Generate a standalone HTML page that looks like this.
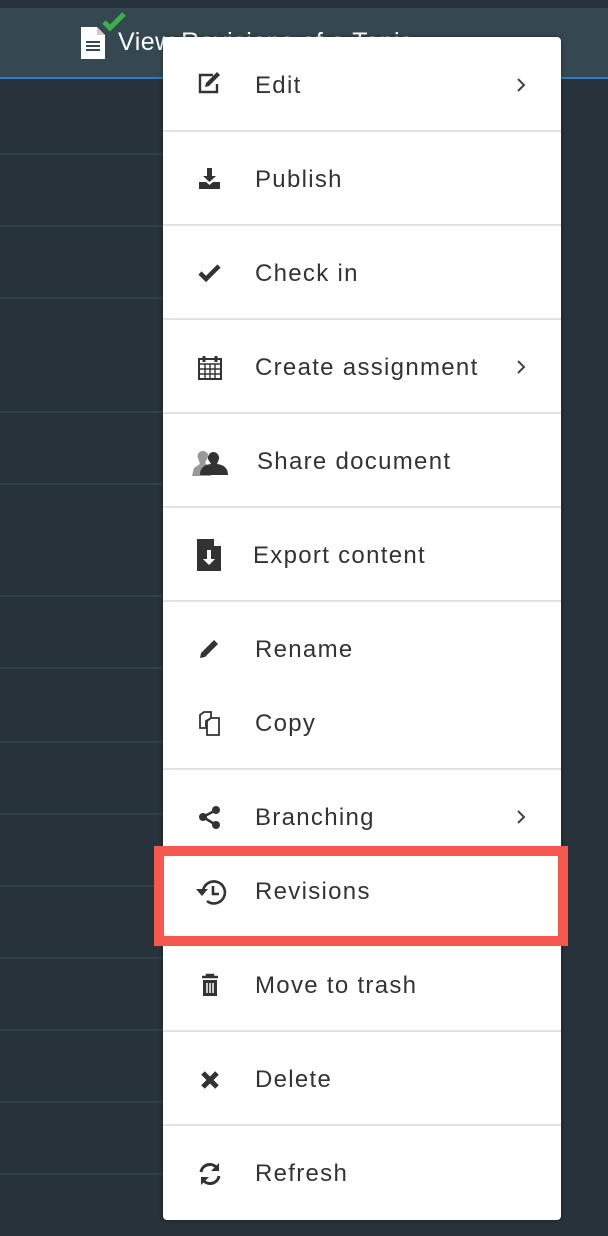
<!DOCTYPE html>
<html><head><meta charset="utf-8"><style>
*{margin:0;padding:0;box-sizing:border-box}
body{width:608px;height:1236px;background:#27323a;position:relative;overflow:hidden;font-family:"Liberation Sans",sans-serif}
.hdr{position:absolute;left:0;top:0;width:608px;height:79px;background:#354750;border-bottom:2px solid #2b7cbf}
.hdr .top{position:absolute;top:0;left:0;width:608px;height:8px;background:#27333a}
.title{position:absolute;left:118px;top:28px;color:#fff;font-size:25px;letter-spacing:0.5px}
.ln{position:absolute;left:0;width:163px;height:2px;background:#313f47}
.menu{position:absolute;left:163px;top:37px;width:398px;height:1183px;background:#fff;border-radius:4px;box-shadow:0 0 4px rgba(0,0,0,.4)}
.it{position:absolute;left:0;width:398px;height:30px}
.it span{position:absolute;left:92px;top:1px;font-size:24px;color:#333;line-height:30px;letter-spacing:1.3px}
.it svg{position:absolute;left:34px;top:3px}
.it .ch{position:absolute;left:352px;top:7px}
.dv{position:absolute;left:0;width:398px;height:2px;background:#e2e2e2}
.red{position:absolute;left:154px;top:846px;width:414px;height:100px;border:10px solid #f5584c}
</style></head><body>
<div class="hdr"><div class="top"></div>
<svg style="position:absolute;left:79px;top:26px" width="28" height="34" viewBox="0 0 28 34"><path d="M2 1h16l8 8v24H2z" fill="#fff"/><path d="M18 1v8h8" fill="#ccc"/><path d="M7 16h14M7 20h14M7 24h14" stroke="#354750" stroke-width="2"/></svg>
<svg style="position:absolute;left:101px;top:12px" width="26" height="20" viewBox="0 0 26 20"><path d="M3 10l6 6L23 2" stroke="#3cb04a" stroke-width="5" fill="none"/></svg>
<div class="title">View Revisions of a Topic</div></div>
<div class="ln" style="top:153px"></div><div class="ln" style="top:225px"></div><div class="ln" style="top:297px"></div><div class="ln" style="top:411px"></div><div class="ln" style="top:483px"></div><div class="ln" style="top:595px"></div><div class="ln" style="top:667px"></div><div class="ln" style="top:741px"></div><div class="ln" style="top:813px"></div><div class="ln" style="top:885px"></div><div class="ln" style="top:957px"></div><div class="ln" style="top:1029px"></div><div class="ln" style="top:1101px"></div><div class="ln" style="top:1173px"></div>
<div class="menu">
<div class="it" style="top:33px"><svg width="28" height="26" viewBox="0 0 28 26" style="left:33px;top:1px"><path d="M17 4H4v17h17v-8" stroke="#333" stroke-width="2.4" fill="none"/><path d="M9 16l1-4 11-11 3 3-11 11z" fill="#333"/></svg><span>Edit</span><svg class="ch" width="12" height="16" viewBox="0 0 12 16"><path d="M3 2l6 6-6 6" stroke="#444" stroke-width="2" fill="none"/></svg></div>
<div class="dv" style="top:93px"></div>
<div class="it" style="top:127px"><svg width="26" height="24" viewBox="0 0 26 24"><path d="M10 1h5v8h4l-6.5 6L6 9h4z" fill="#333"/><path d="M2 15h7l3.5 3 3.5-3h7v7H2z" fill="#333"/></svg><span>Publish</span></div>
<div class="dv" style="top:187px"></div>
<div class="it" style="top:221px"><svg width="26" height="24" viewBox="0 0 26 24"><path d="M3 12l6 6L22 5" stroke="#333" stroke-width="4.5" fill="none"/></svg><span>Check in</span></div>
<div class="dv" style="top:281px"></div>
<div class="it" style="top:315px"><svg width="26" height="26" viewBox="0 0 26 26"><rect x="2" y="4" width="22" height="20" fill="none" stroke="#333" stroke-width="2"/><path d="M2 9h22M2 14h22M2 19h22M8 9v15M13 9v15M18 9v15" stroke="#333" stroke-width="1.4"/><path d="M7 1v6M19 1v6" stroke="#333" stroke-width="3"/></svg><span>Create assignment</span><svg class="ch" width="12" height="16" viewBox="0 0 12 16"><path d="M3 2l6 6-6 6" stroke="#444" stroke-width="2" fill="none"/></svg></div>
<div class="dv" style="top:375px"></div>
<div class="it" style="top:409px"><svg width="38" height="28" viewBox="0 0 38 28" style="left:28px"><path d="M12 2a5 5 0 0 1 5 6l-3 6 6 5v8H1l2-8 6-4-2-6a5 5 0 0 1 5-7z" fill="#999"/><path d="M22 3a6 6 0 0 1 6 7l-2 5c8 1 11 5 11 11H9c0-6 3-10 11-11l-3-5a6 6 0 0 1 5-7z" fill="#333"/></svg><span style="left:94px">Share document</span></div>
<div class="dv" style="top:469px"></div>
<div class="it" style="top:503px"><svg width="28" height="34" viewBox="0 0 28 34" style="left:32px;top:-2px"><path d="M2 1h17l7 7v25H2z" fill="#333"/><path d="M19 1v7h7" fill="#fff"/><path d="M12 12h4v9h4l-6 6-6-6h4z" fill="#fff"/></svg><span style="left:90px">Export content</span></div>
<div class="dv" style="top:563px"></div>
<div class="it" style="top:597px"><svg width="26" height="24" viewBox="0 0 26 24"><path d="M3 21l1-5L17 3l4 4L8 20z" fill="#333"/></svg><span>Rename</span></div>
<div class="it" style="top:671px"><svg width="26" height="26" viewBox="0 0 26 26"><path d="M3 4l4-3h7v6l-5 3v7H3z M10 10l4-3h8v17H10z" fill="none" stroke="#333" stroke-width="1.8"/></svg><span>Copy</span></div>
<div class="dv" style="top:731px"></div>
<div class="it" style="top:765px"><svg width="26" height="26" viewBox="0 0 26 26"><circle cx="19" cy="5" r="4" fill="#333"/><circle cx="6" cy="12" r="4" fill="#333"/><circle cx="19" cy="20" r="4" fill="#333"/><path d="M19 5L6 12l13 8" stroke="#333" stroke-width="2.5" fill="none"/></svg><span>Branching</span><svg class="ch" width="12" height="16" viewBox="0 0 12 16"><path d="M3 2l6 6-6 6" stroke="#444" stroke-width="2" fill="none"/></svg></div>
<div class="it" style="top:839px"><svg width="34" height="28" viewBox="0 0 34 28" style="left:30px"><path d="M10 12a11 11 0 1 1 4 10" stroke="#333" stroke-width="2.6" fill="none"/><path d="M3 10h12l-6 7z" fill="#333"/><path d="M20 7v8h6" stroke="#333" stroke-width="2.6" fill="none"/></svg><span>Revisions</span></div>
<div class="it" style="top:933px"><svg width="26" height="26" viewBox="0 0 26 26"><path d="M5 4h16M10 4V2h6v2" stroke="#333" stroke-width="2.5" fill="none"/><path d="M6 7h14v16H6z" fill="#333"/><path d="M10 10v10M13 10v10M16 10v10" stroke="#fff" stroke-width="1.5"/></svg><span>Move to trash</span></div>
<div class="dv" style="top:993px"></div>
<div class="it" style="top:1027px"><svg width="26" height="26" viewBox="0 0 26 26"><path d="M6 6l14 14M20 6L6 20" stroke="#333" stroke-width="5"/></svg><span>Delete</span></div>
<div class="dv" style="top:1087px"></div>
<div class="it" style="top:1121px"><svg width="26" height="26" viewBox="0 0 26 26"><path d="M4 11a9 9 0 0 1 16-4" stroke="#333" stroke-width="3" fill="none"/><path d="M22 2v8h-8z" fill="#333"/><path d="M22 15a9 9 0 0 1-16 4" stroke="#333" stroke-width="3" fill="none"/><path d="M4 24v-8h8z" fill="#333"/></svg><span>Refresh</span></div>
</div>
<div class="red"></div>
</body></html>
